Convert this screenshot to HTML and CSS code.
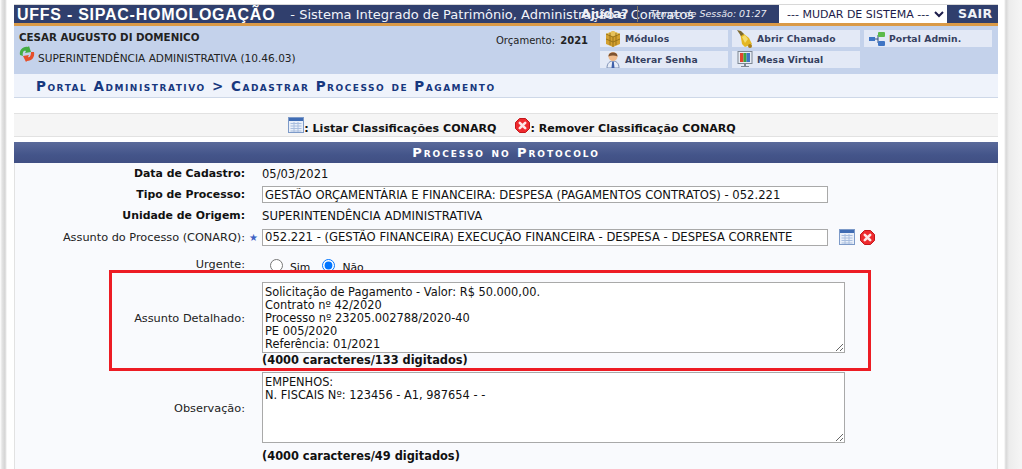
FILE: index.html
```html
<!DOCTYPE html>
<html lang="pt-BR">
<head>
<meta charset="utf-8">
<title>SIPAC</title>
<link rel="stylesheet" href="styles.css">
</head>
<body>
<svg class="defs" width="0" height="0" aria-hidden="true">
  <symbol id="i-table" viewBox="0 0 16 16">
    <rect x="0.5" y="0.500" width="15" height="15" fill="#e9eff9" stroke="#7d9ac8"/>
    <rect x="1" y="1" width="14" height="3" fill="#3f6cb4"/>
    <path d="M2.500 6.500h11M2.500 9h11M2.500 11.500h11M2.500 14h11M6 5v10M10 5v10" stroke="#a9bedf" fill="none"/>
  </symbol>
  <symbol id="i-x" viewBox="0 0 15 15">
    <path d="M4.500 .5h6l4 4v6l-4 4h-6l-4-4v-6z" fill="#ee2a2e" stroke="#c3171b"/>
    <path d="M4.800 4.800l5.400 5.400M10.200 4.800l-5.400 5.400" stroke="#fde8e8" stroke-width="2.600" stroke-linecap="round"/>
  </symbol>
</svg>

<div class="page">
  <header class="topbar">
    <span class="brand">UFFS - SIPAC-HOMOLOGAÇÃO</span>
    <span class="subtitle">- Sistema Integrado de Patrimônio, Administração e Contratos</span>
    <span class="help">Ajuda?</span>
    <span class="divider"></span>
    <span class="session">Tempo de Sessão: 01:27</span>
    <select class="system"><option>--- MUDAR DE SISTEMA ---</option></select>
    <span class="exit">SAIR</span>
  </header>

  <section class="userbar">
    <div class="user">
      <strong class="user-name">CESAR AUGUSTO DI DOMENICO</strong>
      <div class="user-unit">
        <svg class="icon-swap" width="16" height="16" viewBox="0 0 16 16">
          <path d="M1 9C0 4 4 0 9 1l1-1 2 6-6 1 1-2C5 4 3 6 4 10z" fill="#45ad42"/>
          <path d="M15 6c1 5-2 9-7 9l-1 1-3-6 6-1-1 2c2 1 3-2 3-5z" fill="#e5502a"/>
        </svg>
        <span>SUPERINTENDÊNCIA ADMINISTRATIVA (10.46.03)</span>
      </div>
    </div>
    <div class="budget">Orçamento: <strong>2021</strong></div>
    <nav class="shortcuts">
      <a class="shortcut">
        <svg width="16" height="16" viewBox="0 0 16 16"><path d="M1 3l7-3 7 3v10l-7 3-7-3z" fill="#d3a02f"/><path d="M1 3l7-3 7 3-7 3z" fill="#e8c25a"/><path d="M1 3l7 3 7-3M8 6v10M5 2v12M11 2v12M1 8l7 3 7-3" stroke="#9a7418" fill="none"/></svg>
        Módulos</a>
      <a class="shortcut">
        <svg width="16" height="18" viewBox="0 0 16 18"><path d="M3 3l4 1 5 4 3 6-7 3-3-3-1-6z" fill="#e4b722"/><path d="M5 7l3-2 3 4-3 4z" fill="#f5dd6e"/><path d="M0 0l4 1 3 3-3 2z" fill="#7d6a30"/><circle cx="13" cy="16" r="2" fill="#a87e18"/></svg>
        Abrir Chamado</a>
      <a class="shortcut">
        <svg width="16" height="14" viewBox="0 0 16 14"><path d="M5 7h4M9 3v8" stroke="#33507f" fill="none"/><rect x="0" y="5" width="6" height="4" fill="#3f75c4"/><rect x="9" y="0" width="7" height="5" rx="1" fill="#5dbb4a"/><rect x="9" y="9" width="7" height="5" rx="1" fill="#3f75c4"/></svg>
        Portal Admin.</a>
      <a class="shortcut">
        <svg width="16" height="17" viewBox="0 0 16 17"><path d="M2 17c0-5 3-7 6-7s6 2 6 7z" fill="#e8edf7" stroke="#7c8fb5"/><path d="M7.200 10.500L6.500 17h3l-.7-6.500z" fill="#3f5fa8"/><circle cx="8" cy="5.500" r="4.500" fill="#f0bb8c"/><path d="M3.500 5.500C3 0 13 0 12.500 5.500 10 4 6 4 3.500 5.500z" fill="#7d5230"/></svg>
        Alterar Senha</a>
      <a class="shortcut">
        <svg width="16" height="17" viewBox="0 0 16 17"><rect x="1" y=".5" width="14" height="12" fill="#e8edf5" stroke="#7d8794"/><rect x="3" y="2" width="3.500" height="9" fill="#e2452f"/><rect x="6.500" y="2" width="3" height="9" fill="#3fa53a"/><rect x="9.500" y="2" width="3.500" height="9" fill="#3f75c4"/><path d="M7 13h2v2h3v1H4v-1h3z" fill="#7d8794"/></svg>
        Mesa Virtual</a>
    </nav>
  </section>

  <div class="crumb">Portal Administrativo &gt; Cadastrar Processo de Pagamento</div>

  <div class="legend">
    <svg class="legend-icon"><use href="#i-table"/></svg>
    <span class="legend-text">: Listar Classificações CONARQ</span>
    <svg class="legend-icon legend-x"><use href="#i-x"/></svg>
    <span class="legend-text">: Remover Classificação CONARQ</span>
  </div>

  <h2 class="panel-title">Processo no Protocolo</h2>

  <form class="panel">
    <div class="row row-a">
      <div class="lbl strong">Data de Cadastro:</div>
      <div class="val">05/03/2021</div>
    </div>
    <div class="row row-a">
      <div class="lbl strong">Tipo de Processo:</div>
      <div class="val"><input class="field" type="text" value="GESTÃO ORÇAMENTÁRIA E FINANCEIRA: DESPESA (PAGAMENTOS CONTRATOS) - 052.221"></div>
    </div>
    <div class="row row-a">
      <div class="lbl strong">Unidade de Origem:</div>
      <div class="val val-caps">SUPERINTENDÊNCIA ADMINISTRATIVA</div>
    </div>
    <div class="row row-a">
      <div class="lbl">Assunto do Processo (CONARQ):</div>
      <div class="val">
        <span class="star">★</span>
        <input class="field" type="text" value="052.221 - (GESTÃO FINANCEIRA) EXECUÇÃO FINANCEIRA - DESPESA - DESPESA CORRENTE">
        <svg class="act-icon act-table"><use href="#i-table"/></svg>
        <svg class="act-icon act-x"><use href="#i-x"/></svg>
      </div>
    </div>
    <div class="row row-urgent">
      <div class="lbl">Urgente:</div>
      <div class="val radios">
        <input class="radio" type="radio" name="urgente"><span class="radio-text">Sim</span>
        <input class="radio" type="radio" name="urgente" checked><span class="radio-text">Não</span>
      </div>
    </div>
    <div class="row row-text">
      <div class="lbl">Assunto Detalhado:</div>
      <div class="val"><textarea class="area">Solicitação de Pagamento - Valor: R$ 50.000,00.
Contrato nº 42/2020
Processo nº 23205.002788/2020-40
PE 005/2020
Referência: 01/2021</textarea></div>
    </div>
    <div class="row row-count">
      <div class="lbl"></div>
      <div class="val count">(4000 caracteres/133 digitados)</div>
    </div>
    <div class="row row-text row-obs">
      <div class="lbl">Observação:</div>
      <div class="val"><textarea class="area">EMPENHOS:
N. FISCAIS Nº: 123456 - A1, 987654 - -</textarea></div>
    </div>
    <div class="row row-count row-count2">
      <div class="lbl"></div>
      <div class="val count">(4000 caracteres/49 digitados)</div>
    </div>
    <div class="highlight"></div>
  </form>
</div>
</body>
</html>
```
FILE: styles.css
```css
* { box-sizing: border-box; }
html, body { height: 469px; overflow: hidden; }
body {
  margin: 0;
  color: #111;
  font-family: "DejaVu Sans", Verdana, sans-serif;
  font-size: 10.500px;
  background:
    linear-gradient(90deg, #fff 0, #e4e4e4 2px, #d4d4d4 5px, #fff 7px) left top / 14px 100% no-repeat,
    linear-gradient(90deg, #fff 0, #d8d8d8 2px, #ececec 5px, #f4f4f4 16px) 1004px 0 / 18px 100% no-repeat,
    #fff;
}
.defs { position: absolute; }
.page {
  width: 984px;
  margin-left: 14px;
  padding-top: 4px;
  position: relative;
}

/* top bar */
.topbar {
  height: 22px;
  padding-top: 1px;
  background: #303f6d;
  border-top: 1px solid #d8d8d8;
  border-bottom: 3px solid #da9a47;
  color: #fff;
  display: flex;
  align-items: center;
  position: relative;
  white-space: nowrap;
}
.brand {
  margin-left: 3px;
  font: bold 16px "Liberation Sans", Arial, sans-serif;
  letter-spacing: .74px;
}
.subtitle { margin-left: 15px; font-size: 13px; color: #f2f4fa; }
.help {
  position: absolute;
  left: 567px;
  top: 1px;
  font: bold 12.500px "DejaVu Sans", sans-serif;
  color: #eef0f6;
}
.divider {
  position: absolute;
  left: 623px;
  top: 1px;
  width: 1px;
  height: 16px;
  background: #8a7a60;
}
.session {
  position: absolute;
  left: 636px;
  top: 3px;
  font-size: 9.500px;
  font-style: italic;
  color: #e8ebf3;
}
.system {
  position: absolute;
  left: 765px;
  top: 0;
  width: 168px;
  height: 18px;
  border: 0;
  border-radius: 0;
  padding-left: 4px;
  background-color: #fff;
  font: 11px "DejaVu Sans", sans-serif;
  color: #1c1c4a;
}
.exit {
  position: absolute;
  left: 944px;
  top: 1px;
  font: bold 12.500px "DejaVu Sans", sans-serif;
  letter-spacing: .400px;
  color: #f0f2f8;
}

/* user bar */
.userbar {
  height: 48px;
  background: #c4d2eb;
  display: flex;
}
.user { width: 482px; padding: 5px 0 0 5px; }
.user-name { display: block; font: bold 10.300px "DejaVu Sans", sans-serif; color: #222; }
.user-unit { display: flex; align-items: flex-end; margin-top: 3px; font-size: 10.570px; color: #222; gap: 3px; height: 17px; }
.icon-swap { margin-bottom: 1px; }
.user-unit span { margin-bottom: -1px; }
.budget { width: 104px; padding-top: 9px; font-size: 10px; color: #222; }
.budget strong { font-size: 10px; margin-left: 2px; }
.shortcuts {
  display: grid;
  grid-template-columns: repeat(3, 128px);
  grid-auto-rows: 17px;
  gap: 4px;
  padding-top: 4px;
}
.shortcut {
  background: #e3e9f6;
  display: flex;
  align-items: center;
  font-weight: bold;
  font-size: 9.200px;
  color: #35405f;
  padding-left: 5px;
  gap: 4px;
  letter-spacing: .1px;
  white-space: nowrap;
}

/* breadcrumb */
.crumb {
  height: 24px;
  padding: 4px 0 0 22px;
  background: #eff3fb;
  border-bottom: 1px solid #ced8e8;
  color: #17387e;
  font: bold 13.500px "DejaVu Sans", sans-serif;
  font-variant: small-caps;
  letter-spacing: 1.520px;
  white-space: nowrap;
}

/* legend */
.legend {
  height: 24px;
  margin-top: 15px;
  background: #f5f5f5;
  border-top: 1px solid #e2e2e2;
  border-bottom: 1px solid #e2e2e2;
  display: flex;
  align-items: center;
  justify-content: center;
  font-weight: bold;
  font-size: 11.100px;
  padding-left: 12px;
}
.legend-icon { width: 16px; height: 16px; }
.legend-x { margin-left: 19px; margin-top: 1px; width: 15px; height: 15px; }
.legend-text { margin-top: 6px; }

/* panel */
.panel-title {
  margin: 5px 0 0;
  height: 21px;
  background: linear-gradient(#5a6a9a, #44558a 60%, #404f83);
  color: #fff;
  text-align: center;
  font: bold 13px "DejaVu Sans", sans-serif;
  font-variant: small-caps;
  letter-spacing: 1.950px;
  line-height: 21px;
}
.panel {
  position: relative;
  height: 306px;
  background: #f9fafd;
  border-left: 1px solid #e2e2e2;
  border-right: 1px solid #e2e2e2;
}
.row { display: flex; align-items: center; }
.row-a { height: 21.200px; }
.lbl {
  width: 230px;
  text-align: right;
  flex: none;
  font-size: 11.300px;
  color: #222;
}
.lbl.strong { font-weight: bold; font-size: 10.900px; color: #111; }
.val {
  margin-left: 17px;
  flex: 1;
  display: flex;
  align-items: center;
  font-size: 11.500px;
  position: relative;
}
.val-caps { font-size: 11.700px; }
.field {
  width: 566px;
  height: 17px;
  border: 1px solid #a9a9a9;
  background: #fff;
  padding: 0 2px;
  font: 11.600px "DejaVu Sans", sans-serif;
  color: #111;
}
.star {
  position: absolute;
  left: -13px;
  top: 3px;
  color: #3f62c4;
  font-size: 10px;
}
.act-icon { width: 16px; height: 16px; }
.act-table { margin-left: 11px; }
.act-x { margin-left: 5px; width: 15px; height: 15px; }
.row-urgent { height: 31px; padding-top: 5px; }
.row-urgent .lbl { margin-top: -3px; }
.radio { width: 13px; height: 13px; margin: 0 0 0 8px; accent-color: #0075ff; }
.radio-text { font-size: 10.800px; }
.radio + .radio-text { margin-left: 7px; margin-top: 3px; }
.radio-text + .radio { margin-left: 12px; }
.row-text { height: 71px; margin-top: 3px; }
.row-text .lbl { padding-top: 2px; }
.area {
  display: block;
  width: 583px;
  height: 71px;
  border: 1px solid #a9a9a9;
  border-radius: 0;
  background: #fff;
  padding: 3px 2px 0;
  font: 11.400px/13px "DejaVu Sans", sans-serif;
  color: #111;
  overflow: hidden;
}
.row-count { height: 15px; }
.count { font-weight: bold; font-size: 11.400px; }
.row-obs { margin-top: 4px; }
.row-count2 { margin-top: 6px; }
.highlight {
  position: absolute;
  left: 94px;
  top: 107px;
  width: 762px;
  height: 101px;
  border: 3px solid #ed1c24;
  pointer-events: none;
}
```
